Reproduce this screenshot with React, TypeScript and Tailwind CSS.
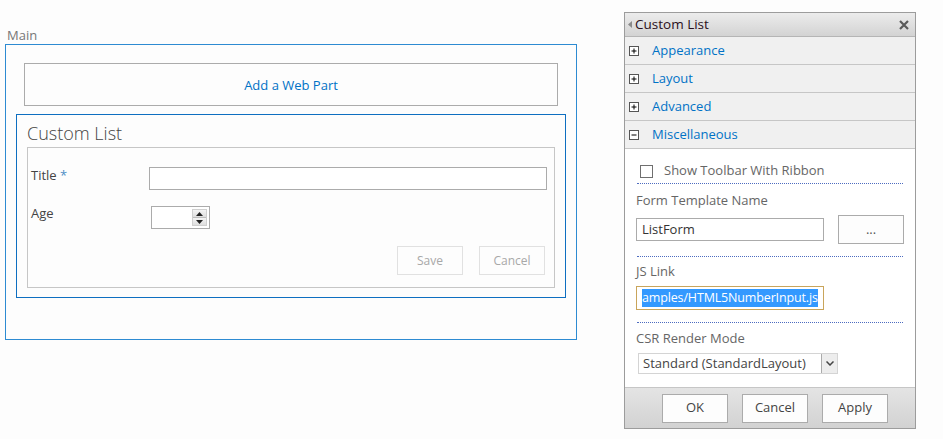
import { Fragment } from 'react'

const FONT = { fontFamily: '"Open Sans", "Noto Sans", Arial, sans-serif' }

function PlusBox({ open }: { open?: boolean }) {
  return (
    <svg width="10" height="10" viewBox="0 0 10 10" className="shrink-0">
      <rect x="0.5" y="0.5" width="9" height="9" fill="#fff" stroke="#555" />
      <path d="M2.5 5h5" stroke="#000" strokeWidth="1" />
      {!open && <path d="M5 2.5v5" stroke="#000" strokeWidth="1" />}
    </svg>
  )
}

function Dotted() {
  return <div className="mx-[12px] h-0 border-t border-dotted border-[#4d6cc0]" />
}

const SECTIONS = ['Appearance', 'Layout', 'Advanced']

export default function App() {
  return (
    <div className="w-[943px] h-[439px] flex bg-[#fdfdfd] text-[13px]" style={FONT}>
      {/* left: page zone */}
      <div className="w-[572px] ml-[5px] pt-[27px] shrink-0">
        <div className="pl-[2px] h-[17px] leading-[17px] text-[#777]">Main</div>
        <div className="border border-[#2d8bd2] h-[296px] pt-[18px]">
          <div className="mx-[18px] h-[43px] pt-[2px] border border-[#ababab] flex items-center justify-center text-[#0072c6]">
            Add a Web Part
          </div>
          <div className="mx-[10px] mt-[8px] h-[184px] border border-[#0e6fc1] pl-[10px] pr-[10px]">
            <div className="h-[32px] pt-[7px] text-[18px] leading-[22px] font-light text-[#444]">Custom List</div>
            <div className="h-[141px] border border-[#c6c6c6] pl-[3px] pr-[7px] pt-[19px]">
              <div className="flex items-center h-[23px]">
                <div className="w-[118px] text-[#444] -mt-[6px]">
                  Title <span className="text-[#4f8fc6]">*</span>
                </div>
                <div className="flex-1 h-[23px] border border-[#ababab] bg-white" />
              </div>
              <div className="flex items-center mt-[16px] h-[23px]">
                <div className="w-[120px] text-[#444] -mt-[8px]">Age</div>
                <div className="w-[59px] h-[23px] border border-[#ababab] bg-white flex items-center justify-end pr-[2px]">
                  <div className="w-[15px] h-[17px] flex flex-col border border-[#cfcfcf]">
                    <div className="flex-1 bg-gradient-to-b from-[#f4f4f4] to-[#dedede] flex items-center justify-center border-b border-[#bdbdbd]">
                      <svg width="7" height="4" viewBox="0 0 7 4"><path d="M3.5 0L7 4H0z" fill="#222" /></svg>
                    </div>
                    <div className="flex-1 bg-gradient-to-b from-[#f4f4f4] to-[#dedede] flex items-center justify-center">
                      <svg width="7" height="4" viewBox="0 0 7 4"><path d="M0 0h7L3.5 4z" fill="#222" /></svg>
                    </div>
                  </div>
                </div>
              </div>
              <div className="flex justify-end gap-[16px] mt-[17px] pr-[2px]">
                <button className="w-[66px] h-[29px] border border-[#e1e1e1] bg-[#fdfdfd] text-[12px] text-[#a8a8a8]">Save</button>
                <button className="w-[66px] h-[29px] border border-[#e1e1e1] bg-[#fdfdfd] text-[12px] text-[#a8a8a8]">Cancel</button>
              </div>
            </div>
          </div>
        </div>
      </div>

      {/* right: tool pane */}
      <div className="ml-[47px] mt-[12px] w-[292px] h-[417px] border border-[#9c9c9c] flex flex-col bg-white shrink-0">
        <div className="h-[24px] flex items-center bg-gradient-to-b from-[#ececec] to-[#d3d3d3] border-b border-[#b5b5b5] pl-[3px] pr-[6px]">
          <svg width="4" height="7" viewBox="0 0 4 7" className="mr-[3px]"><path d="M4 0v7L0 3.5z" fill="#8a8a8a" /></svg>
          <span className="text-[#2a1020] flex-1 text-[13.5px]">Custom List</span>
          <svg width="10" height="10" viewBox="0 0 10 10"><path d="M1 1l8 8M9 1l-8 8" stroke="#5a5a5a" strokeWidth="2.2" /></svg>
        </div>
        {SECTIONS.map(s => (
          <Fragment key={s}>
            <div className="h-[28px] flex items-center bg-[#f0f0f0] border-b border-[#c6c6c6] pl-[4px]">
              <PlusBox />
              <span className="ml-[13px] text-[#0072c6]">{s}</span>
            </div>
          </Fragment>
        ))}
        <div className="h-[28px] flex items-center bg-[#f0f0f0] border-b border-[#c6c6c6] pl-[4px]">
          <PlusBox open />
          <span className="ml-[13px] text-[#0072c6]">Miscellaneous</span>
        </div>

        <div className="flex-1 pt-[15px]">
          <div className="flex items-center pl-[15px] h-[14px]">
            <div className="w-[13px] h-[13px] border border-[#6f6f6f] bg-white" />
            <span className="ml-[11px] text-[#666]">Show Toolbar With Ribbon</span>
          </div>
          <div className="mt-[5px]"><Dotted /></div>
          <div className="pl-[11px] mt-[8px] h-[17px] leading-[17px] text-[#666]">Form Template Name</div>
          <div className="flex items-center pl-[11px] mt-[6px]">
            <div className="w-[188px] h-[23px] border border-[#ababab] bg-white pl-[5px] leading-[21px] text-[#333]">ListForm</div>
            <button className="ml-[14px] w-[66px] h-[29px] border border-[#ababab] bg-[#fdfdfd] text-[#555] leading-none">...</button>
          </div>
          <div className="mt-[12px]"><Dotted /></div>
          <div className="pl-[11px] mt-[6px] h-[17px] leading-[17px] text-[#666]">JS Link</div>
          <div className="pl-[11px] mt-[6px]">
            <div className="w-[188px] h-[24px] border border-[#c9a55b] bg-white pl-[5px] flex items-center overflow-hidden">
              <span className="bg-[#3399ff] text-white text-[12.5px] tracking-[-0.15px] leading-[18px] whitespace-nowrap">amples/HTML5NumberInput.js</span>
            </div>
          </div>
          <div className="mt-[12px]"><Dotted /></div>
          <div className="pl-[11px] mt-[7px] h-[17px] leading-[17px] text-[#666]">CSR Render Mode</div>
          <div className="pl-[13px] mt-[6px]">
            <div className="w-[200px] h-[21px] border border-[#d4d4d4] bg-white flex items-center">
              <span className="flex-1 pl-[4px] text-[#444] whitespace-nowrap">Standard (StandardLayout)</span>
              <div className="w-[16px] h-[19px] border-l border-[#ababab] bg-[#ededed] flex items-center justify-center">
                <svg width="8" height="5" viewBox="0 0 8 5"><path d="M0.5 0.5L4 4l3.5-3.5" stroke="#444" strokeWidth="1.5" fill="none" /></svg>
              </div>
            </div>
          </div>
        </div>

        <div className="h-[41px] border-t border-[#c6c6c6] bg-gradient-to-b from-[#e4e4e4] to-[#d2d2d2] flex items-center gap-[14px] pl-[37px]">
          <button className="w-[66px] h-[29px] border border-[#ababab] bg-[#fdfdfd] text-[#444]">OK</button>
          <button className="w-[66px] h-[29px] border border-[#ababab] bg-[#fdfdfd] text-[#444]">Cancel</button>
          <button className="w-[66px] h-[29px] border border-[#ababab] bg-[#fdfdfd] text-[#444]">Apply</button>
        </div>
      </div>
    </div>
  )
}
